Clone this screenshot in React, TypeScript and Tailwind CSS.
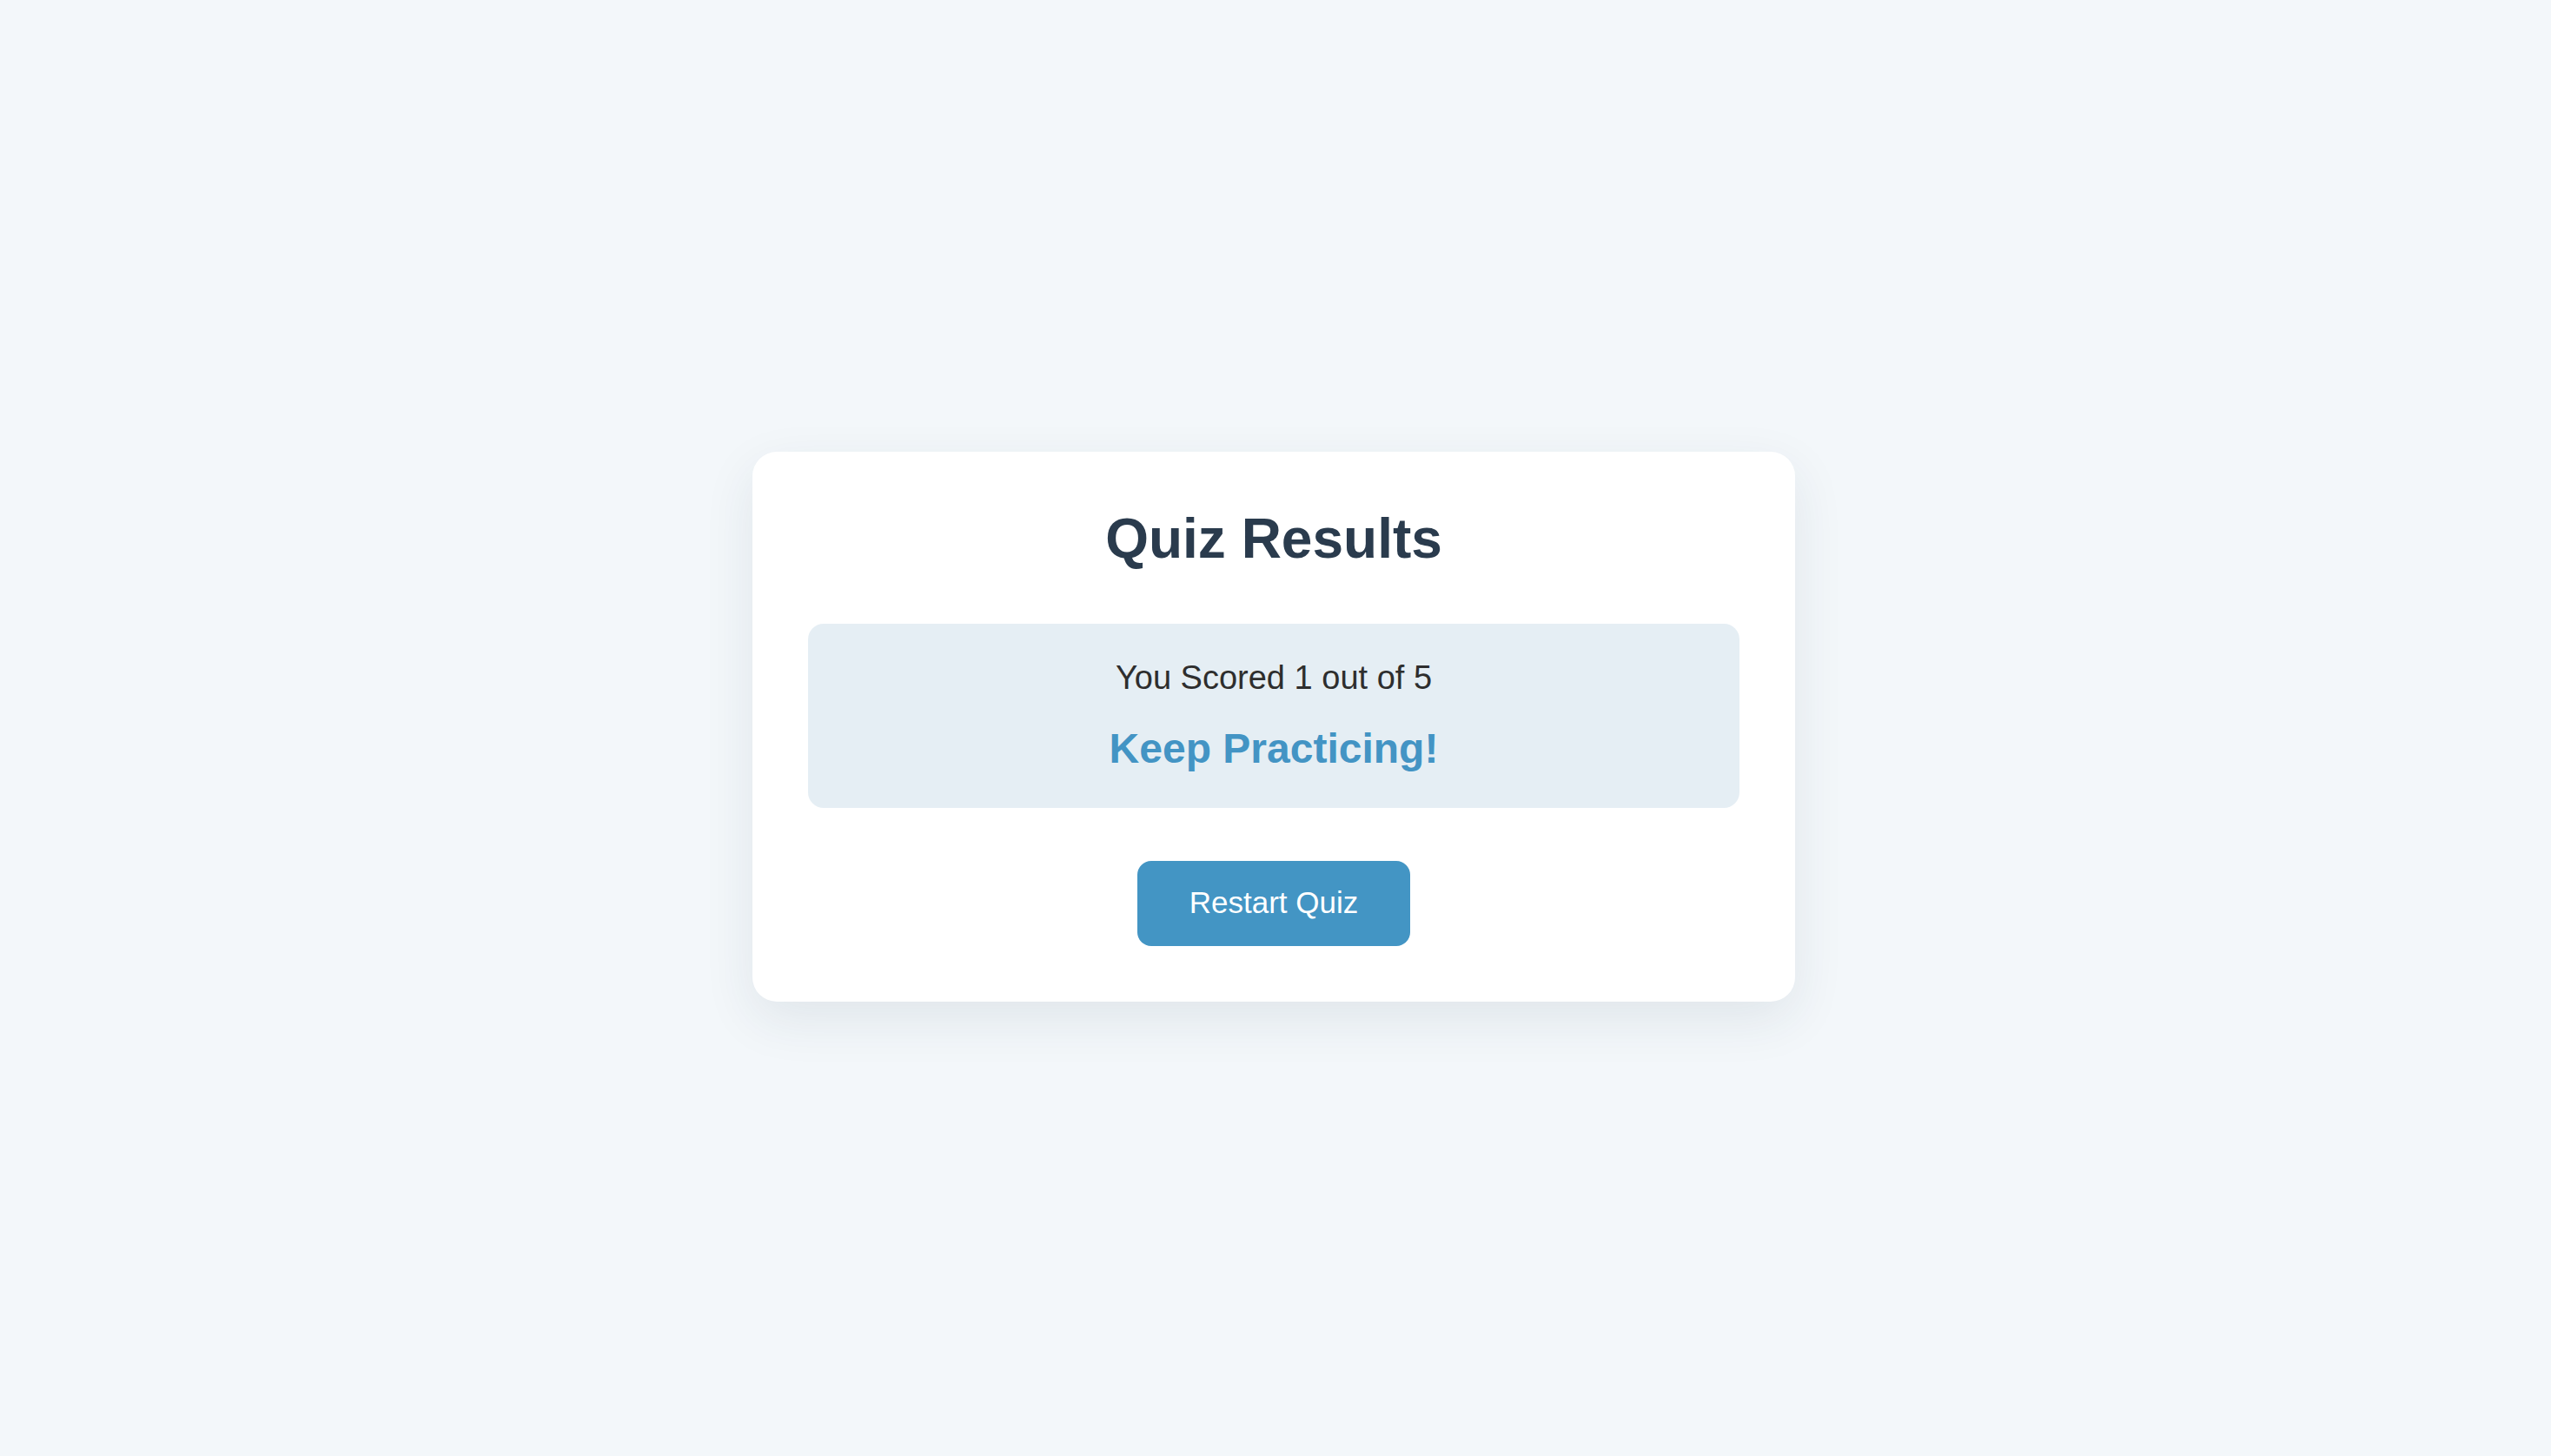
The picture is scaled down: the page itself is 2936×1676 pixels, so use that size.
import React from 'react';

const App: React.FC = () => {
  const score = 1;
  const total = 5;

  return (
    <div
      className="min-h-screen w-full bg-[#f3f7fa] flex items-center justify-center pr-[4px] pb-[4px]"
      style={{ fontFamily: '"Liberation Sans", Arial, sans-serif' }}
    >
      <div className="w-[1200px] bg-white rounded-[28px] p-[64px] shadow-[0_20px_60px_rgba(30,50,80,0.09)] flex flex-col items-center">
        <h1 className="text-[64px] leading-[72px] font-bold text-[#2a3b4d] text-center">
          Quiz Results
        </h1>

        <div className="w-full mt-[62px] bg-[#e5eef4] rounded-[18px] py-[40px] flex flex-col items-center">
          <p className="text-[38px] leading-[44px] text-[#2e2e2e]">
            You Scored {score} out of {total}
          </p>
          <p className="mt-[32px] text-[48px] leading-[56px] font-bold text-[#4394c4]">
            Keep Practicing!
          </p>
        </div>

        <button className="mt-[61px] h-[98px] px-[60px] bg-[#4395c4] text-white text-[35px] rounded-[16px]">
          Restart Quiz
        </button>
      </div>
    </div>
  );
};

export default App;
